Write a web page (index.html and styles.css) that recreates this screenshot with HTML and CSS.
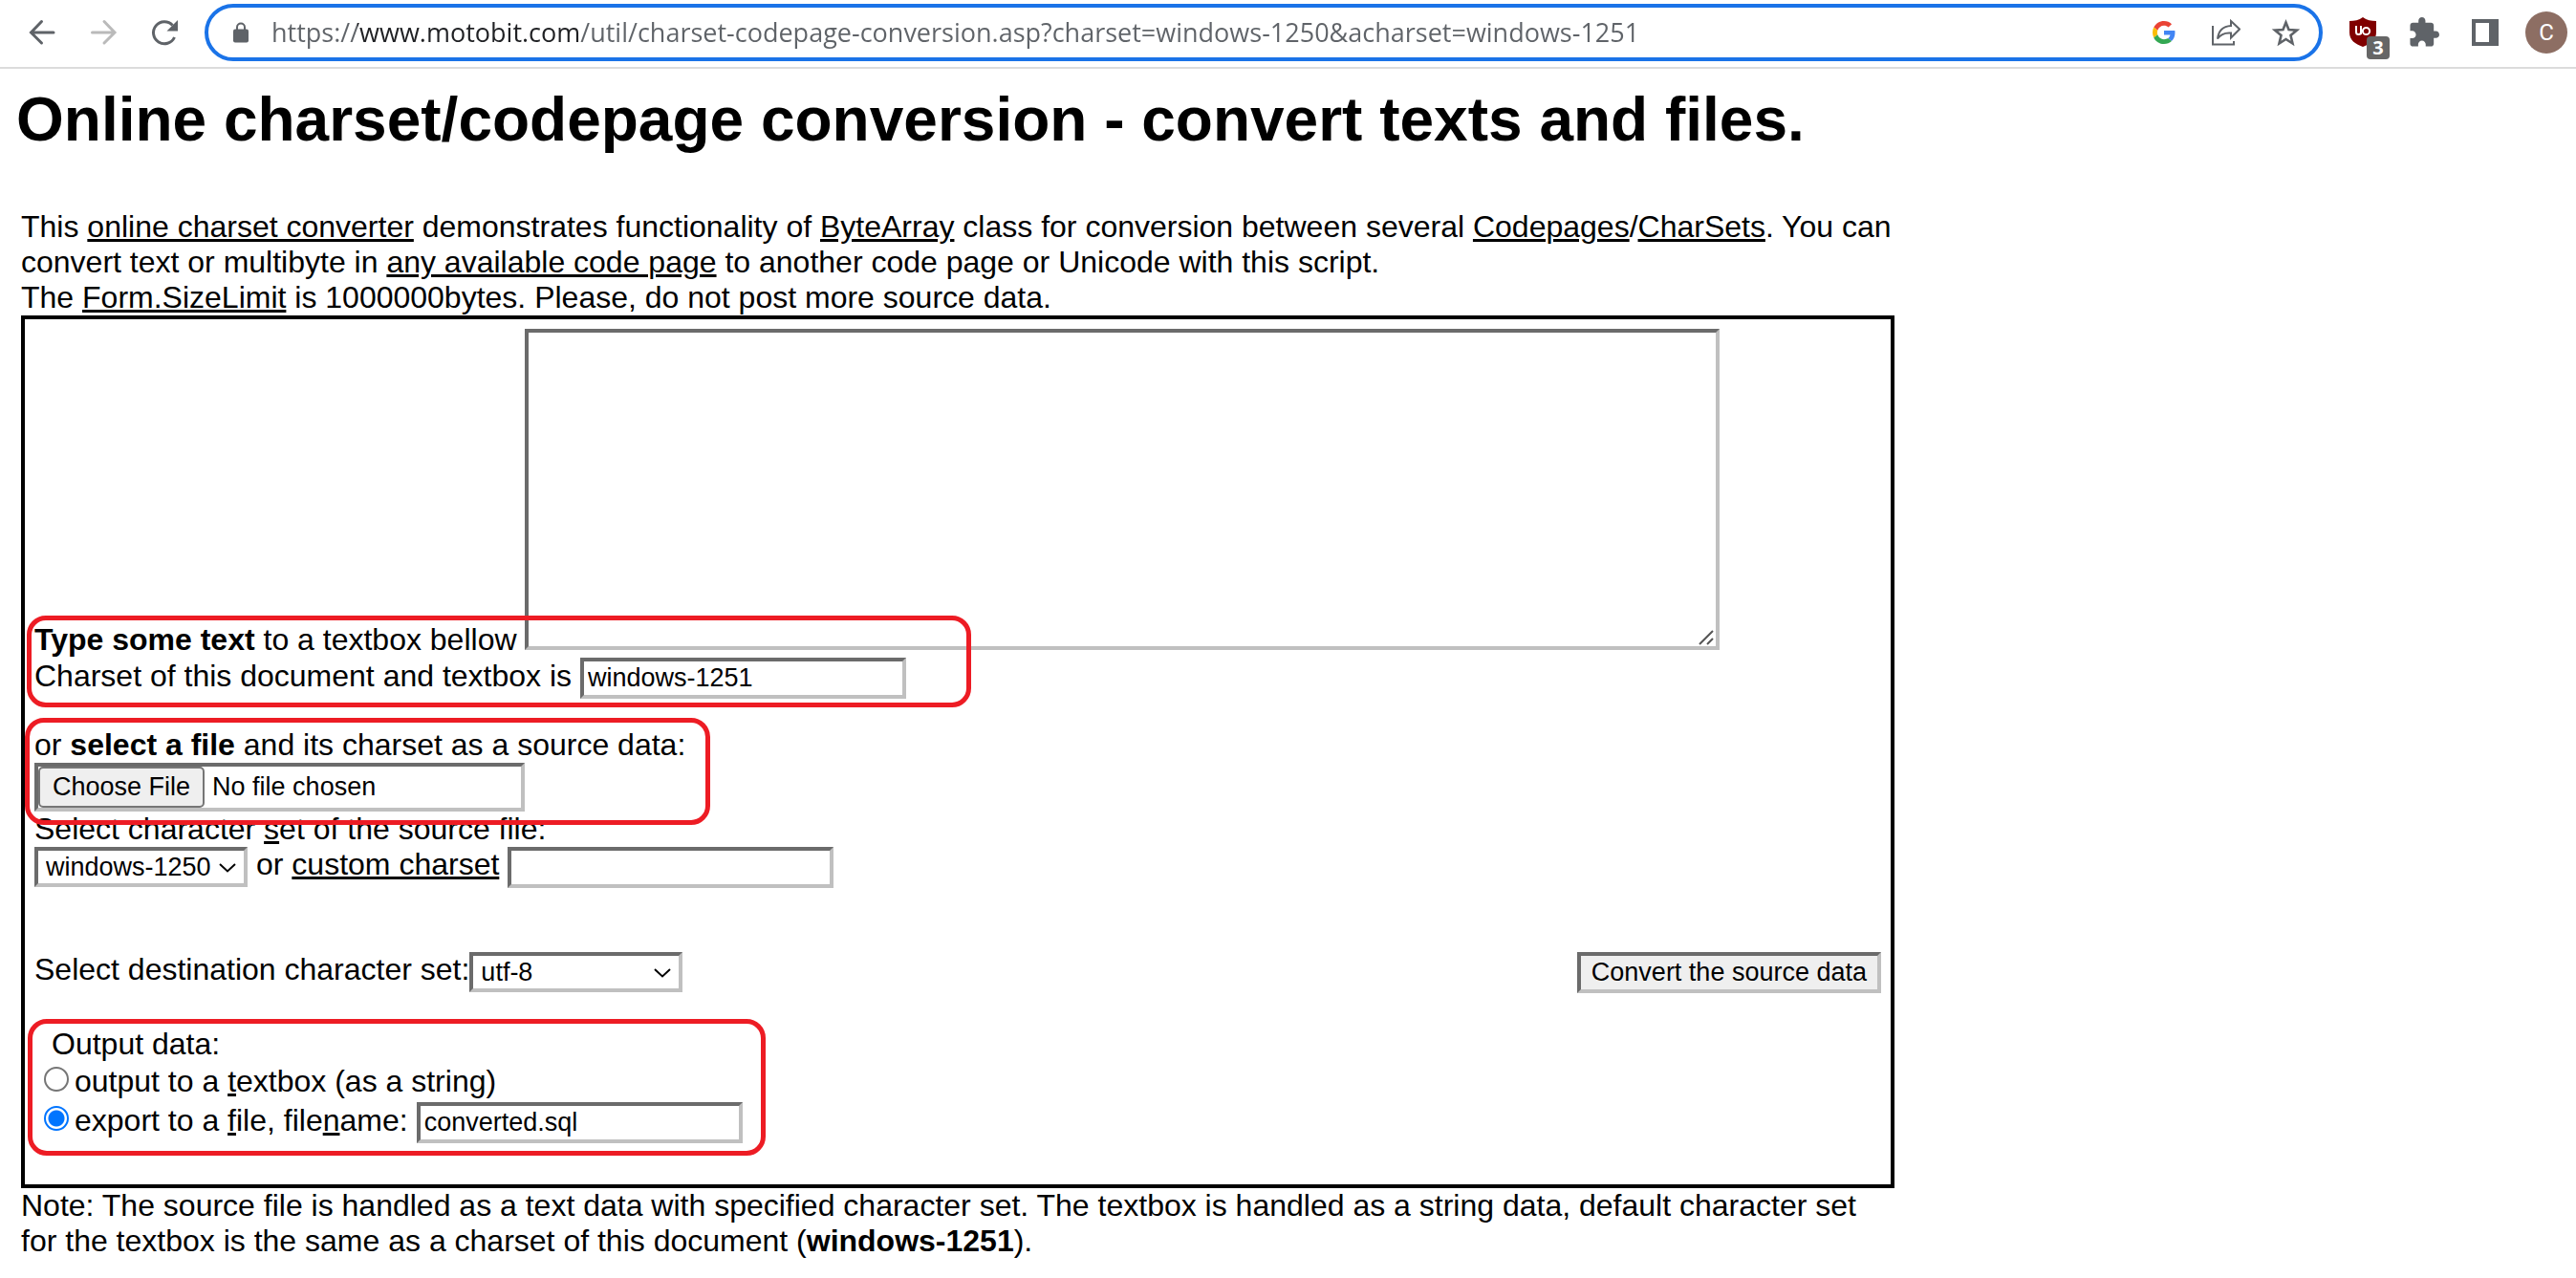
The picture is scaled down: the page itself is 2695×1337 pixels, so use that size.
FILE: index.html
```html
<!DOCTYPE html>
<html lang="en">
<head>
<meta charset="utf-8">
<title>Online charset/codepage conversion - convert texts and files.</title>
<link rel="stylesheet" href="styles.css">
</head>
<body>
<header class="toolbar">
  <nav class="nav-buttons" aria-label="Navigation">
    <button type="button" class="icon-button" aria-label="Back">
      <svg width="32" height="32" viewBox="0 0 32 32" fill="none" stroke="#5f6368" stroke-width="3" stroke-linecap="round"><path d="M28 16H5M15.500 4.500L4.500 16L15.500 27"/></svg>
    </button>
    <button type="button" class="icon-button" aria-label="Forward" disabled>
      <svg width="32" height="32" viewBox="0 0 32 32" fill="none" stroke="#bababa" stroke-width="3" stroke-linecap="round"><path d="M4.500 16H27M17 4.500L28 16L17 27"/></svg>
    </button>
    <button type="button" class="icon-button" aria-label="Reload">
      <svg width="32" height="32" viewBox="0 0 32 32"><path d="M26.500 21A11.500 11.500 0 1 1 24.500 8.500" fill="none" stroke="#5f6368" stroke-width="3"/><path d="M30 3V14.500H18.500Z" fill="#5f6368"/></svg>
    </button>
  </nav>
  <div class="omnibox">
    <svg width="16" height="22" viewBox="0 0 16 22"><path d="M4 9V5.500a4 4 0 0 1 8 0V9" fill="none" stroke="#5f6368" stroke-width="2"/><rect x="0" y="7.500" width="16" height="14" rx="2" fill="#5f6368"/></svg>
    <input class="url" type="text" aria-label="Address" value="https://www.motobit.com/util/charset-codepage-conversion.asp?charset=windows-1250&amp;acharset=windows-1251">
    <div class="omnibox-actions">
      <button type="button" class="icon-button" aria-label="Google search">
        <svg width="28" height="24" viewBox="0 0 56 48"><path fill="#EA4335" d="M24 9.500c3.540 0 6.710 1.220 9.210 3.600l6.850-6.850C35.900 2.380 30.470 0 24 0 14.620 0 6.510 5.380 2.560 13.220l7.980 6.190C12.430 13.720 17.740 9.500 24 9.500z"/><path fill="#4285F4" d="M46.980 24.550c0-1.570-.15-3.090-.38-4.550H24v9.020h12.940c-.58 2.960-2.260 5.480-4.780 7.180l7.730 6c4.510-4.180 7.090-10.360 7.090-17.650z"/><path fill="#FBBC05" d="M10.530 28.590c-.48-1.450-.76-2.990-.76-4.590s.27-3.140.76-4.590l-7.980-6.190C.92 16.460 0 20.120 0 24s.92 7.540 2.560 10.780l7.970-6.190z"/><path fill="#34A853" d="M24 48c6.480 0 11.930-2.130 15.890-5.810l-7.730-6c-2.150 1.450-4.920 2.300-8.160 2.300-6.260 0-11.570-4.220-13.470-9.910l-7.980 6.190C6.510 42.620 14.620 48 24 48z"/></svg>
      </button>
      <button type="button" class="icon-button" aria-label="Share">
        <svg width="32" height="30" viewBox="0 0 32 30" fill="none" stroke="#5f6368" stroke-width="2"><path d="M3 8V27.500H25V24"/><path d="M22 3L31 11.500L22 20.500V15.500C16 15 11 17 8 21.500C9 13 14 8.500 22 8Z"/></svg>
      </button>
      <button type="button" class="icon-button" aria-label="Bookmark this page">
        <svg width="30" height="29" viewBox="0 0 30 29" fill="none" stroke="#5f6368" stroke-width="2.600"><path d="M15.500 3.500L18.500 11L27 11.600L20.500 17L22.500 25.500L15.500 21L8.500 25.500L10.500 17L4 11.600L12.500 11Z"/></svg>
      </button>
    </div>
  </div>
  <div class="extensions">
    <button type="button" class="icon-button" aria-label="uBlock Origin, 3 blocked">
      <svg width="28" height="32" viewBox="0 0 28 32"><path d="M14 0C10 3 5 4 0 4V16C0 24 6 28 14 31C22 28 28 24 28 16V4C23 4 18 3 14 0Z" fill="#800000"/><path d="M7 9V15.500Q7 18 9.500 18Q12 18 12 15.500V9M12 18V9" fill="none" stroke="#fff" stroke-width="2"/><circle cx="17.500" cy="14.500" r="3.600" fill="none" stroke="#fff" stroke-width="2"/></svg>
      <span class="badge">3</span>
    </button>
    <button type="button" class="icon-button" aria-label="Extensions">
      <svg width="32" height="32" viewBox="1 1 22 22" fill="#5f6368"><path d="M20.500 11H19V7c0-1.100-.9-2-2-2h-4V3.500C13 2.120 11.880 1 10.500 1S8 2.120 8 3.500V5H4c-1.100 0-1.990.9-1.990 2v3.800H3.500c1.490 0 2.700 1.210 2.700 2.700s-1.210 2.700-2.700 2.700H2V20c0 1.100.9 2 2 2h3.800v-1.500c0-1.490 1.210-2.700 2.700-2.700 1.490 0 2.700 1.210 2.700 2.700V22H17c1.100 0 2-.9 2-2v-4h1.500c1.380 0 2.500-1.120 2.500-2.500S21.880 11 20.500 11z"/></svg>
    </button>
    <button type="button" class="icon-button" aria-label="Side panel">
      <svg width="28" height="28" viewBox="0 0 28 28"><path d="M0 0H28V28H0ZM4 4V24H18V4Z" fill="#5f6368" fill-rule="evenodd"/></svg>
    </button>
    <button type="button" class="avatar" aria-label="Profile">C</button>
  </div>
</header>

<main class="page">
  <h1>Online charset/codepage conversion - convert texts and files.</h1>
  <div class="column">
    <p>This <a href="#">online charset converter</a> demonstrates functionality of <a href="#">ByteArray</a> class for conversion between several <a href="#">Codepages</a>/<a href="#">CharSets</a>. You can convert text or multibyte in <a href="#">any available code page</a> to another code page or Unicode with this script.<br>
    The <a href="#">Form.SizeLimit</a> is 1000000bytes. Please, do not post more source data.</p>
    <form class="converter">
      <div class="group source-text">
        <div><label for="text"><b>Type some text</b> to a textbox bellow</label> <textarea id="text"></textarea></div>
        <div><label for="doc-charset">Charset of this document and textbox is</label> <input class="field" id="doc-charset" type="text" value="windows-1251"></div>
        <span class="mark"></span>
      </div>
      <div class="group source-file">
        <label for="file">or <b>select a file</b> and its charset as a source data:</label>
        <input class="file" id="file" type="file">
        <span class="mark"></span>
      </div>
      <div class="group source-charset">
        <label for="src-charset">Select character <u>s</u>et of the source file:</label>
        <div class="row"><span class="select"><select id="src-charset"><option>windows-1250</option></select><svg width="18" height="10" viewBox="0 0 18 10"><path d="M1 1L9 8.500L17 1" fill="none" stroke="#000" stroke-width="2"/></svg></span> <span>or <label for="custom"><a href="#">custom charset</a></label></span> <input class="field" id="custom" type="text"></div>
      </div>
      <div class="group destination">
        <label for="dst-charset">Select destination character set:</label><span class="select"><select id="dst-charset"><option>utf-8</option></select><svg width="18" height="10" viewBox="0 0 18 10"><path d="M1 1L9 8.500L17 1" fill="none" stroke="#000" stroke-width="2"/></svg></span>
        <button type="submit" class="convert">Convert the source data</button>
      </div>
      <div class="group output">
        <div class="output-title">Output data:</div>
        <div class="option"><input type="radio" name="output" id="out-text"><label for="out-text">output to a <u>t</u>extbox (as a string)</label></div>
        <div class="option"><input type="radio" name="output" id="out-file" checked><label for="out-file">export to a <u>f</u>ile, file<u>n</u>ame:</label> <input class="field" type="text" aria-label="Filename" value="converted.sql"></div>
        <span class="mark"></span>
      </div>
    </form>
    <p>Note: The source file is handled as a text data with specified character set. The textbox is handled as a string data, default character set for the textbox is the same as a charset of this document (<b>windows-1251</b>).</p>
  </div>
</main>
</body>
</html>
```
FILE: styles.css
```css
* {
  box-sizing: border-box;
}

body {
  margin: 0;
  background: #fff;
  color: #000;
  font: 32px/37px "Liberation Sans", Arial, sans-serif;
}

a {
  color: inherit;
}

a,
u {
  text-decoration-thickness: 3px;
}

/* Browser toolbar */
.toolbar {
  display: flex;
  align-items: center;
  height: 72px;
  padding: 0 9px 2px 28px;
  border-bottom: 2px solid #dcdcdc;
}

.nav-buttons {
  display: flex;
  gap: 32px;
  margin-right: 26px;
}

.icon-button {
  position: relative;
  display: flex;
  padding: 0;
  border: 0;
  background: none;
}

.omnibox {
  display: flex;
  flex: 1;
  align-items: center;
  height: 60px;
  padding: 0 20px 0 26px;
  border: 4px solid #1a73e8;
  border-radius: 30px;
}

/* The host name is darker than the rest of the address */
.url {
  flex: 1;
  min-width: 0;
  height: 44px;
  margin-left: 24px;
  padding: 0;
  border: 0;
  outline: 0;
  font: 27px/44px "Open Sans", "Noto Sans", sans-serif;
  color: transparent;
  background: linear-gradient(90deg, #5f6368 90px, #202124 90px, #202124 322px, #5f6368 322px);
  background-clip: text;
}

.omnibox-actions {
  display: flex;
  align-items: center;
  gap: 32px;
}

.extensions {
  display: flex;
  align-items: center;
  gap: 34px;
  margin-left: 28px;
}

.badge {
  position: absolute;
  top: 20px;
  left: 18px;
  width: 24px;
  height: 24px;
  border-radius: 4px;
  background: #666;
  color: #fff;
  font: bold 20px/24px "Open Sans", sans-serif;
}

.avatar {
  width: 44px;
  height: 44px;
  margin-left: -6px;
  padding: 0;
  border: 0;
  border-radius: 50%;
  background: #8d6e63;
  color: #fff;
  font: 24px/44px Roboto, sans-serif;
}

/* Page */
.page {
  padding: 16px 17px;
}

h1 {
  margin: 0 0 57px;
  font-size: 64px;
  line-height: 74px;
}

.column {
  max-width: 1965px;
  padding-left: 5px;
}

p {
  margin: 0;
}

.converter {
  padding: 10px;
  border: 4px solid #000;
}

.group {
  position: relative;
}

.mark {
  position: absolute;
  z-index: 1;
  border: 5px solid #ed1c24;
  border-radius: 20px;
  pointer-events: none;
}

.source-text .mark {
  top: 300px;
  left: -8px;
  width: 988px;
  height: 96px;
}

.source-file .mark {
  top: -10px;
  left: -10px;
  width: 717px;
  height: 112px;
}

.output .mark {
  top: -8px;
  left: -7px;
  width: 772px;
  height: 143px;
}

textarea,
.field,
.file,
select,
.convert {
  margin: 0;
  border: 4px solid;
  border-color: #6b6b6b #c0c0c0 #c0c0c0 #6b6b6b;
  border-radius: 0;
  background: #fff;
  color: #000;
  font: 27px/31px "Liberation Sans", Arial, sans-serif;
}

textarea {
  width: 1250px;
  max-width: 100%;
  height: 336px;
  background: #fff url("data:image/svg+xml,%3Csvg xmlns='http://www.w3.org/2000/svg' width='20' height='20'%3E%3Cpath d='M3 18L17 4M11 18L17 12' stroke='%23555' stroke-width='2'/%3E%3C/svg%3E") no-repeat right bottom;
}

textarea::-webkit-resizer {
  background: transparent;
}

.field {
  width: 341px;
  height: 43px;
  padding: 2px 4px;
}

.source-file {
  margin-top: 30px;
}

.source-file label,
.source-charset > label {
  display: block;
}

.file {
  display: block;
  width: 513px;
  height: 51px;
}

.file::file-selector-button {
  height: 43px;
  margin: 0 8px 0 0;
  padding: 2px 13px;
  border: 2px solid #767676;
  border-radius: 5px;
  background: #efefef;
  color: #000;
  font: inherit;
}

.row {
  display: flex;
  gap: 9px;
}

.select {
  display: inline-flex;
  position: relative;
}

.select svg {
  position: absolute;
  top: 17px;
  right: 12px;
  pointer-events: none;
}

select {
  width: 223px;
  height: 42px;
  padding: 0 8px;
  appearance: none;
}

.destination {
  display: flex;
  align-items: flex-start;
  margin-top: 67px;
}

.convert {
  height: 43px;
  margin-left: auto;
  padding: 0 11px;
  background: #efefef;
}

.output {
  margin-top: 35px;
  padding-bottom: 38px;
}

.output-title {
  padding-left: 18px;
}

.option {
  display: flex;
  align-items: baseline;
  height: 40px;
  padding-top: 2px;
  gap: 9px;
}

.option input[type="radio"] {
  flex: none;
  width: 26px;
  height: 26px;
  margin: 0 -3px 0 10px;
  border: 2px solid #767676;
  border-radius: 50%;
  appearance: none;
}

.option input[type="radio"]:checked {
  border-color: #0075ff;
  background: radial-gradient(circle, #0075ff 8px, #fff 9px);
}
```
